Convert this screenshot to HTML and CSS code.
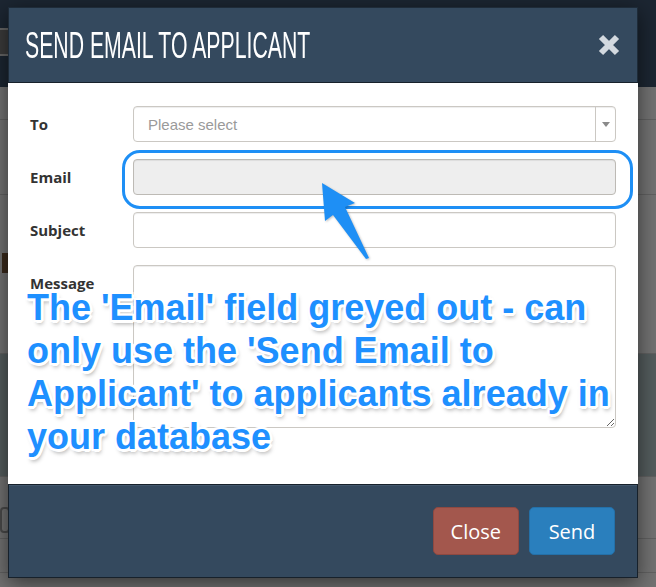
FILE: index.html
```html
<!DOCTYPE html>
<html lang="en">
<head>
<meta charset="utf-8">
<title>Send Email to Applicant</title>
<link rel="stylesheet" href="styles.css">
</head>
<body>
  <div class="page">
    <div class="navbar"><span class="nav-btn"></span></div>
    <div class="row r1"></div>
    <div class="row r2"></div>
    <div class="row r3"><span class="mark"></span></div>
    <div class="row r4"></div>
    <div class="row r5"><span class="mark2"></span></div>
    <div class="row r6"></div>
    <div class="row r7"></div>
  </div>

  <div class="modal">
    <div class="modal-header">
      <h1 class="modal-title"><span>SEND EMAIL TO APPLICANT</span></h1>
      <button class="close" type="button" aria-label="Close">
        <svg width="22" height="22" viewBox="0 0 22 22"><path d="M3 3 L19 19 M19 3 L3 19" stroke="#d3d9df" stroke-width="6" fill="none"/></svg>
      </button>
    </div>
    <form class="modal-body">
      <div class="field">
        <label class="label">To</label>
        <div class="control select"><span class="placeholder">Please select</span><span class="select-arrow"></span></div>
      </div>
      <div class="field">
        <label class="label">Email</label>
        <input class="control disabled" type="text" disabled>
      </div>
      <div class="field">
        <label class="label">Subject</label>
        <input class="control" type="text">
      </div>
      <div class="field">
        <label class="label">Message</label>
        <textarea class="control textarea"></textarea>
      </div>
    </form>
    <div class="modal-footer">
      <button class="btn btn-close" type="button">Close</button>
      <button class="btn btn-send" type="button">Send</button>
    </div>
  </div>

  <div class="highlight"></div>
  <svg class="arrow" width="656" height="587" viewBox="0 0 656 587">
    <polygon points="322,183 355,203 345,207 369,258 366,259 333,215 325,221" fill="#1e8ff5"/>
  </svg>
  <p class="callout">The 'Email' field greyed out - can only use the 'Send Email to Applicant' to applicants already in your database</p>
</body>
</html>
```
FILE: styles.css
```css
html, body {
  margin: 0;
  padding: 0;
}
body {
  width: 656px;
  height: 587px;
  overflow: hidden;
  position: relative;
  background: #727272;
  font-family: "Open Sans", "Liberation Sans", sans-serif;
}

/* page behind the modal */
.page {
  display: flex;
  flex-direction: column;
  height: 587px;
}
.navbar {
  flex: none;
  height: 87px;
  background: #1c2632;
  box-sizing: border-box;
  padding-top: 28px;
}
.nav-btn {
  display: block;
  width: 16px;
  height: 24px;
  margin-left: -8px;
  border: 2px solid #666;
  border-radius: 4px;
  background: #3b3b3b;
}
.row {
  flex: none;
  border-bottom: 1px solid #616161;
  position: relative;
}
.r1 { height: 32px; }
.r2 { height: 74px; }
.r3 { height: 158px; }
.r4 { height: 122px; background: #545c5d; }
.r5 { height: 61px; }
.r6 { height: 33px; }
.r7 { flex: 1; border-bottom: 0; }
.mark {
  position: absolute;
  left: 2px;
  top: 58px;
  width: 6px;
  height: 20px;
  background: #3a2a1c;
}
.mark2 {
  position: absolute;
  left: 0;
  top: 30px;
  width: 6px;
  height: 22px;
  border: 2px solid #4a4a4a;
  border-radius: 4px;
}

/* modal */
.modal {
  position: absolute;
  left: 8px;
  top: 7px;
  width: 630px;
  box-shadow: 0 5px 20px rgba(0, 0, 0, 0.55);
}
.modal-header {
  height: 76px;
  box-sizing: border-box;
  background: #34495e;
  border: 1px solid #1e2b38;
  border-bottom-color: #17212b;
  display: flex;
  align-items: center;
  justify-content: space-between;
  padding: 0 17px 0 16px;
}
.modal-title {
  margin: 0;
  font-family: "Liberation Sans", "Arial", sans-serif;
  font-weight: 400;
  font-size: 37px;
  line-height: 1;
  color: #ffffff;
  width: 290px;
  white-space: nowrap;
}
.modal-title span {
  display: inline-block;
  transform: scaleX(0.574);
  transform-origin: left center;
}
.close {
  width: 22px;
  height: 22px;
  padding: 0;
  border: 0;
  background: none;
  display: block;
}
.close svg { display: block; }

.modal-body {
  background: #ffffff;
  padding: 23px 22px 56px;
  display: flex;
  flex-direction: column;
  gap: 17px;
  margin: 0;
}
.field {
  display: flex;
  align-items: flex-start;
}
.label {
  flex: none;
  width: 103px;
  font-weight: 700;
  font-size: 15px;
  line-height: 36px;
  color: #333333;
}
.control {
  flex: 1;
  height: 36px;
  margin: 0;
  box-sizing: border-box;
  border: 1px solid #cbc8c3;
  border-radius: 4px;
  background: #ffffff;
  box-shadow: inset 0 1px 1px rgba(0, 0, 0, 0.075);
  font-family: "Liberation Sans", sans-serif;
  font-size: 15px;
}
.select {
  display: flex;
  align-items: center;
  padding-left: 14px;
}
.placeholder {
  flex: 1;
  color: #9a9a9a;
}
.select-arrow {
  align-self: stretch;
  width: 19px;
  border-left: 1px solid #cbc8c3;
  display: flex;
  align-items: center;
  justify-content: center;
}
.select-arrow::after {
  content: "";
  border-left: 4px solid transparent;
  border-right: 4px solid transparent;
  border-top: 5px solid #8a8a8a;
}
.disabled {
  background: #eeeeee;
  border-color: #bdbab5;
}
.textarea {
  height: 163px;
  resize: vertical;
}

.modal-footer {
  height: 94px;
  box-sizing: border-box;
  background: #34495e;
  border: 1px solid #17212b;
  box-shadow: inset 0 1px 0 #42576c;
  display: flex;
  justify-content: flex-end;
  align-items: center;
  gap: 10px;
  padding-right: 22px;
}
.btn {
  height: 48px;
  min-width: 86px;
  padding: 0 17px;
  box-sizing: border-box;
  border-radius: 5px;
  font-family: "Open Sans", sans-serif;
  font-size: 20px;
  color: #ffffff;
}
.btn-close {
  background: #a3574d;
  border: 1px solid #8e4941;
}
.btn-send {
  background: #2a7fbd;
  border: 1px solid #2470a8;
}

/* annotation */
.highlight {
  position: absolute;
  left: 122px;
  top: 150px;
  width: 511px;
  height: 59px;
  box-sizing: border-box;
  border: 3px solid #1e8ff5;
  border-radius: 18px;
}
.arrow {
  position: absolute;
  left: 0;
  top: 0;
  pointer-events: none;
  filter: drop-shadow(1px 1px 1px rgba(0, 0, 0, 0.25));
}
.callout {
  position: absolute;
  left: 27px;
  top: 286px;
  width: 600px;
  margin: 0;
  font-family: "Liberation Sans", "Arial", sans-serif;
  font-weight: 700;
  font-size: 36px;
  line-height: 43px;
  color: #1e90ff;
  text-shadow:
    2px 0 0 #fff, -2px 0 0 #fff, 0 2px 0 #fff, 0 -2px 0 #fff,
    2px 2px 0 #fff, -2px -2px 0 #fff, 2px -2px 0 #fff, -2px 2px 0 #fff,
    3px 1px 0 #fff, 1px 3px 0 #fff,
    2px 4px 4px rgba(0, 0, 0, 0.35);
}
```
